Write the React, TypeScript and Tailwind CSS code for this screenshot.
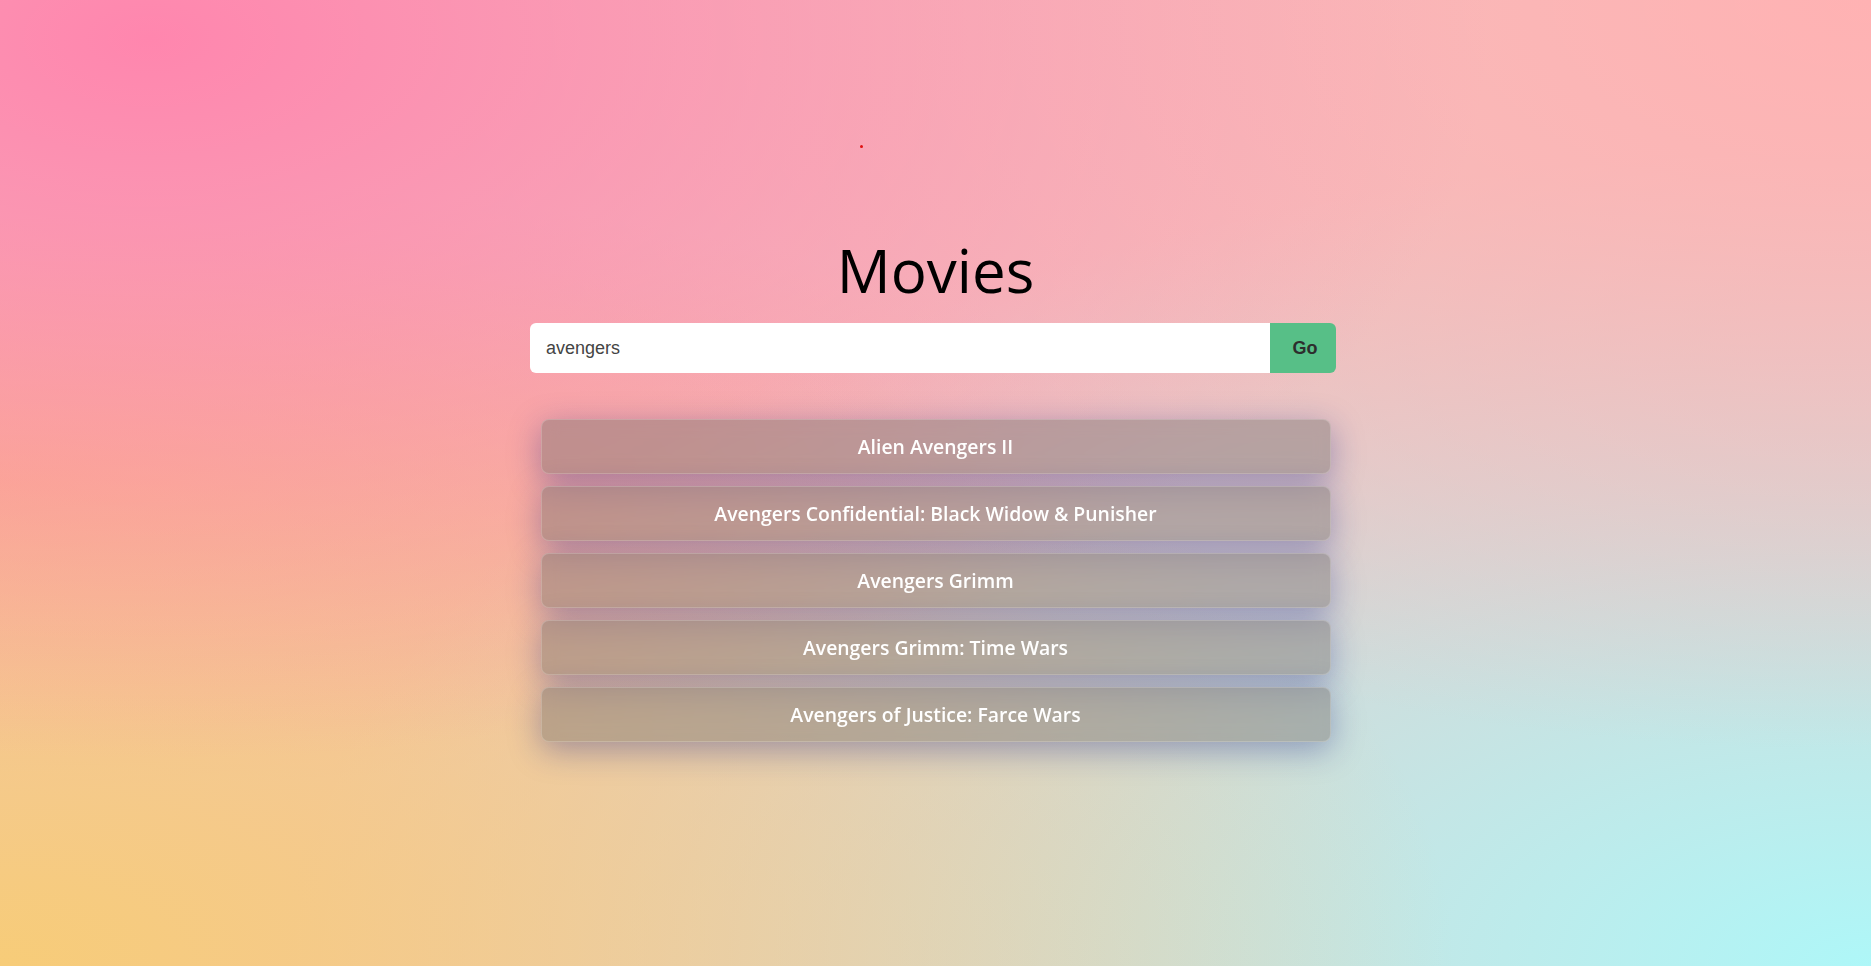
const movies = [
  "Alien Avengers II",
  "Avengers Confidential: Black Widow & Punisher",
  "Avengers Grimm",
  "Avengers Grimm: Time Wars",
  "Avengers of Justice: Farce Wars",
];

export default function App() {
  return (
    <div className="relative flex min-h-screen w-full flex-col items-center bg-[#efc3c0] bg-[radial-gradient(ellipse_at_8%_4%,#ff86ae_0%,rgba(255,134,174,0)_55%),radial-gradient(ellipse_at_100%_0%,#ffb2b3_0%,rgba(255,178,179,0)_55%),radial-gradient(ellipse_at_0%_100%,#f7cc78_0%,rgba(247,204,120,0)_55%),radial-gradient(ellipse_at_100%_100%,#aef7f8_0%,rgba(174,247,248,0)_60%),radial-gradient(ellipse_at_0%_50%,#f9a898_0%,rgba(249,168,152,0)_45%)] pt-[240px] font-['Open_Sans',sans-serif]">
      <span className="absolute left-[860px] top-[145px] h-[3px] w-[3px] rounded-full bg-[#e01010]" />

      <h1 className="text-[60px] leading-none font-normal text-black">Movies</h1>

      <div className="mt-[23px] ml-[-5px] flex h-[50px] w-[806px]">
        <input
          readOnly
          value="avengers"
          className="h-full flex-1 rounded-l-md bg-white px-4 font-['Liberation_Sans',Arial,sans-serif] text-[18px] text-[#444] outline-none"
        />
        <button className="h-full w-[66px] rounded-r-md bg-[#57bf87] pl-1 font-['Liberation_Sans',Arial,sans-serif] text-[18px] font-bold text-[#2d2d2d]">
          Go
        </button>
      </div>

      <ul className="mt-[46px] flex w-[790px] flex-col gap-3">
        {movies.map((title) => (
          <li
            key={title}
            className="flex h-[55px] items-center justify-center rounded-lg border border-white/20 bg-[rgba(115,110,110,0.42)] text-[19.4px] font-semibold text-white shadow-[0_8px_32px_0_rgba(31,38,135,0.37)] backdrop-blur-sm"
          >
            {title}
          </li>
        ))}
      </ul>
    </div>
  );
}
